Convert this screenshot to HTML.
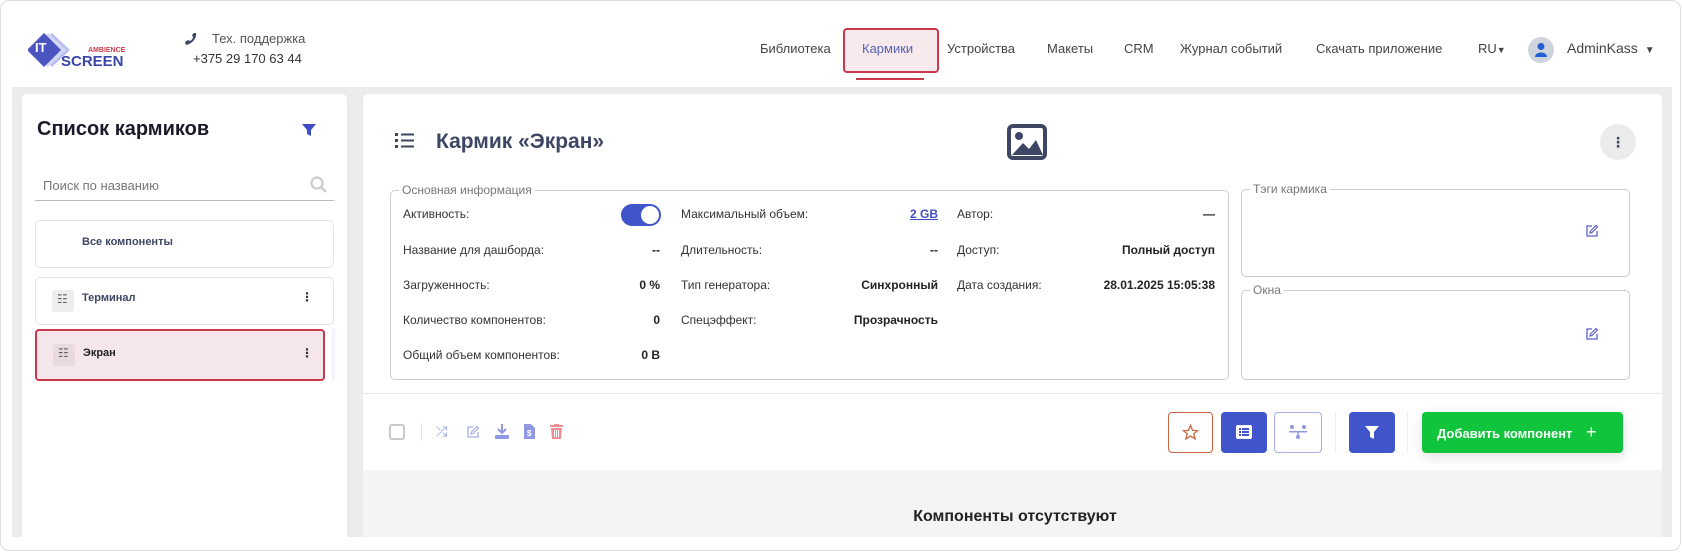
<!DOCTYPE html>
<html><head><meta charset="utf-8"><style>
*{box-sizing:border-box;margin:0;padding:0}
body{width:1682px;height:552px;background:#fff;font-family:"Liberation Sans","DejaVu Sans",sans-serif;position:relative;overflow:hidden;color:#333}
.a{position:absolute}
.frame{left:0;top:0;width:1681px;height:551px;border:1px solid #ddd;border-radius:9px}
.grey{left:12px;top:87px;width:1660px;height:450px;background:#ececec}
.card{background:#fff;border-radius:5px}
.nav{top:41px;font-size:13px;color:#444}
.lbl{font-size:12px;color:#333}
.val{font-size:12px;font-weight:bold;color:#222;text-align:right}
fieldset{position:absolute;border:1px solid #ccc;border-radius:5px}
legend{font-size:12px;color:#777;margin-left:8px;padding:0 3px}
.btn{border-radius:4px;height:41px;top:412px}
</style></head><body>
<div class="a frame"></div>

<!-- logo -->
<svg class="a" style="left:28px;top:30px" width="100" height="40" viewBox="0 0 100 40">
<path d="M24 3 L42 20 L24 37 L6 20Z" fill="#b9c0ee"/>
<path d="M20 3 L38 20 L20 37 L2 20Z" fill="#d4d8f6"/>
<path d="M16 3 L33 20 L16 37 L-1 20Z" fill="#4a55c0"/>
<text x="7" y="22" font-size="13" font-weight="bold" fill="#fff" font-family="Liberation Sans">IT</text>
<text x="60" y="22" font-size="7" font-weight="bold" fill="#d03a4a" font-family="Liberation Sans">AMBIENCE</text>
<text x="33" y="36" font-size="15" font-weight="bold" fill="#3a46a8" font-family="Liberation Sans">SCREEN</text>
</svg>
<svg class="a" style="left:184px;top:32px" width="14" height="14" viewBox="0 0 14 14"><path d="M12 1 C13 6 8 12 2 13 L1 10 L4 8 L6 9 C8 8 9 6 9 5 L8 3 L10 1Z" fill="#3d4663"/></svg>
<div class="a" style="left:212px;top:31px;font-size:13px;color:#555">Тех. поддержка</div>
<div class="a" style="left:193px;top:51px;font-size:13px;color:#333">+375 29 170 63 44</div>

<!-- nav -->
<div class="a nav" style="left:760px">Библиотека</div>
<div class="a" style="left:843px;top:28px;width:96px;height:45px;border:2px solid #c9394a;border-radius:4px;background:#f8e9ec"></div>
<div class="a nav" style="left:862px;color:#5562b8">Кармики</div>
<div class="a" style="left:856px;top:78px;width:68px;height:2px;background:#c9394a"></div>
<div class="a nav" style="left:947px">Устройства</div>
<div class="a nav" style="left:1047px">Макеты</div>
<div class="a nav" style="left:1124px">CRM</div>
<div class="a nav" style="left:1180px">Журнал событий</div>
<div class="a nav" style="left:1316px">Скачать приложение</div>
<div class="a nav" style="left:1478px">RU<span style="font-size:9px">▼</span></div>
<div class="a" style="left:1528px;top:37px;width:26px;height:26px;border-radius:50%;background:#cfd3dc"></div>
<svg class="a" style="left:1534px;top:42px" width="14" height="16" viewBox="0 0 14 16"><circle cx="7" cy="4.5" r="3.5" fill="#1f5fd0"/><path d="M1 15 C1 9 13 9 13 15Z" fill="#1f5fd0"/></svg>
<div class="a nav" style="left:1567px;font-size:14px;top:40px">AdminKass <span style="font-size:10px;margin-left:3px">▼</span></div>

<div class="a grey"></div>

<!-- sidebar -->
<div class="a card" style="left:22px;top:94px;width:325px;height:443px;border-radius:5px 5px 0 0"></div>
<div class="a" style="left:37px;top:118px;font-size:20px;font-weight:bold;color:#1a1a2a">Список кармиков</div>
<svg class="a" style="left:302px;top:124px" width="14" height="13" viewBox="0 0 14 13"><path d="M0 0H14L9 6V12L5 10V6Z" fill="#3f4ec4"/></svg>
<div class="a" style="left:43px;top:178px;font-size:13px;color:#777">Поиск по названию</div>
<svg class="a" style="left:310px;top:176px" width="17" height="17" viewBox="0 0 17 17"><circle cx="7" cy="7" r="5.5" stroke="#ccc" stroke-width="2.2" fill="none"/><path d="M11 11 L16 16" stroke="#ccc" stroke-width="2.5"/></svg>
<div class="a" style="left:35px;top:200px;width:299px;height:1px;background:#bbb"></div>

<div class="a" style="left:35px;top:220px;width:299px;height:48px;border:1px solid #e4e4e4;border-radius:5px"></div>
<div class="a" style="left:82px;top:236px;font-size:11px;font-weight:bold;color:#3d4663">Все компоненты</div>
<div class="a" style="left:35px;top:277px;width:299px;height:48px;border:1px solid #e4e4e4;border-radius:5px"></div>
<div class="a" style="left:52px;top:290px;width:22px;height:22px;background:#eee;border-radius:3px"></div>
<div class="a" style="left:57px;top:292px;font-size:12px;color:#666">☷</div>
<div class="a" style="left:82px;top:292px;font-size:11px;font-weight:bold;color:#3d4663">Терминал</div>
<div class="a" style="left:301px;top:290px;font-size:12px;font-weight:bold">⋮</div>
<div class="a" style="left:332px;top:329px;width:3px;height:52px;background:#f3f4fb"></div>
<div class="a" style="left:35px;top:329px;width:290px;height:52px;border:2px solid #c9394a;border-radius:4px;background:#f4e6eb"></div>
<div class="a" style="left:53px;top:344px;width:22px;height:22px;background:#e8dadf;border-radius:3px"></div>
<div class="a" style="left:58px;top:346px;font-size:12px;color:#666">☷</div>
<div class="a" style="left:83px;top:347px;font-size:11px;font-weight:bold;color:#222">Экран</div>
<div class="a" style="left:301px;top:346px;font-size:12px;font-weight:bold">⋮</div>

<!-- main -->
<div class="a card" style="left:363px;top:94px;width:1299px;height:443px;border-radius:5px 5px 0 0"></div>
<svg class="a" style="left:395px;top:132px" width="19" height="16" viewBox="0 0 19 16"><g fill="#3d4663"><rect x="0" y="1" width="3" height="3"/><rect x="0" y="7" width="3" height="3"/><rect x="0" y="13" width="3" height="3"/><rect x="6" y="1.5" width="13" height="2"/><rect x="6" y="7.5" width="13" height="2"/><rect x="6" y="13.5" width="13" height="2"/></g></svg>
<div class="a" style="left:436px;top:130px;font-size:21px;font-weight:bold;color:#3d4663">Кармик «Экран»</div>
<svg class="a" style="left:1007px;top:124px" width="40" height="36" viewBox="0 0 40 36"><rect x="2" y="2" width="36" height="32" rx="4" fill="none" stroke="#3d4663" stroke-width="4"/><circle cx="12" cy="12" r="4" fill="#3d4663"/><path d="M5 31 L16 19 L22 25 L29 16 L36 31Z" fill="#3d4663"/></svg>
<div class="a" style="left:1600px;top:124px;width:36px;height:36px;border-radius:50%;background:#ebebeb;text-align:center;font-size:14px;font-weight:bold;line-height:36px;color:#3d4663">⋮</div>

<fieldset style="left:390px;top:183px;width:839px;height:197px"><legend>Основная информация</legend></fieldset>
<div class="a lbl" style="left:403px;top:207px">Активность:</div>
<div class="a" style="left:621px;top:204px;width:40px;height:22px;border-radius:11px;background:#3f55c9"></div>
<div class="a" style="left:641px;top:206px;width:18px;height:18px;border-radius:50%;background:#fff"></div>
<div class="a lbl" style="left:403px;top:243px">Название для дашборда:</div>
<div class="a val" style="left:560px;top:243px;width:100px">--</div>
<div class="a lbl" style="left:403px;top:278px">Загруженность:</div>
<div class="a val" style="left:560px;top:278px;width:100px">0 %</div>
<div class="a lbl" style="left:403px;top:313px">Количество компонентов:</div>
<div class="a val" style="left:560px;top:313px;width:100px">0</div>
<div class="a lbl" style="left:403px;top:348px">Общий объем компонентов:</div>
<div class="a val" style="left:560px;top:348px;width:100px">0 B</div>

<div class="a lbl" style="left:681px;top:207px">Максимальный объем:</div>
<div class="a val" style="left:838px;top:207px;width:100px;color:#3f4ec4;text-decoration:underline">2 GB</div>
<div class="a lbl" style="left:681px;top:243px">Длительность:</div>
<div class="a val" style="left:838px;top:243px;width:100px">--</div>
<div class="a lbl" style="left:681px;top:278px">Тип генератора:</div>
<div class="a val" style="left:818px;top:278px;width:120px">Синхронный</div>
<div class="a lbl" style="left:681px;top:313px">Спецэффект:</div>
<div class="a val" style="left:818px;top:313px;width:120px">Прозрачность</div>

<div class="a lbl" style="left:957px;top:207px">Автор:</div>
<div class="a val" style="left:1115px;top:207px;width:100px">—</div>
<div class="a lbl" style="left:957px;top:243px">Доступ:</div>
<div class="a val" style="left:1075px;top:243px;width:140px">Полный доступ</div>
<div class="a lbl" style="left:957px;top:278px">Дата создания:</div>
<div class="a val" style="left:1055px;top:278px;width:160px">28.01.2025 15:05:38</div>

<fieldset style="left:1241px;top:182px;width:389px;height:95px"><legend>Тэги кармика</legend></fieldset>
<fieldset style="left:1241px;top:283px;width:389px;height:97px"><legend>Окна</legend></fieldset>
<svg class="a" style="left:1585px;top:224px" width="14" height="14" viewBox="0 0 14 14"><path d="M7 2H2V12H12V7" fill="none" stroke="#5a62c9" stroke-width="1.3"/><path d="M5 9L5.5 7 11 1.5 12.5 3 7 8.5Z" fill="none" stroke="#5a62c9" stroke-width="1.2"/></svg>
<svg class="a" style="left:1585px;top:327px" width="14" height="14" viewBox="0 0 14 14"><path d="M7 2H2V12H12V7" fill="none" stroke="#5a62c9" stroke-width="1.3"/><path d="M5 9L5.5 7 11 1.5 12.5 3 7 8.5Z" fill="none" stroke="#5a62c9" stroke-width="1.2"/></svg>

<div class="a" style="left:363px;top:393px;width:1299px;height:1px;background:#e6e6e6"></div>

<!-- toolbar -->
<div class="a" style="left:389px;top:424px;width:16px;height:16px;border:2px solid #c8c8c8;border-radius:3px"></div>
<div class="a" style="left:421px;top:423px;width:1px;height:18px;background:#e4e4e4"></div>
<div class="a" style="left:436px;top:423px;font-size:14px;color:#8f98e0">⤮</div>
<svg class="a" style="left:466px;top:425px" width="14" height="14" viewBox="0 0 14 14"><path d="M7 2H2V12H12V7" fill="none" stroke="#a7aee8" stroke-width="1.3"/><path d="M5 9L5.5 7 11 1.5 12.5 3 7 8.5Z" fill="none" stroke="#a7aee8" stroke-width="1.2"/></svg>
<svg class="a" style="left:495px;top:424px" width="14" height="15" viewBox="0 0 14 15"><path d="M7 0V9M3 5L7 9 11 5" stroke="#8f98e0" stroke-width="2" fill="none"/><rect x="0" y="11" width="14" height="4" rx="1" fill="#8f98e0"/></svg>
<svg class="a" style="left:524px;top:424px" width="11" height="15" viewBox="0 0 11 15"><path d="M0 0H7L11 4V15H0Z" fill="#8f98e0"/><text x="3" y="12" font-size="8" fill="#fff" font-family="Liberation Sans" font-weight="bold">$</text></svg>
<svg class="a" style="left:550px;top:424px" width="13" height="15" viewBox="0 0 13 15"><rect x="0" y="1" width="13" height="2" fill="#f08d95"/><rect x="4" y="0" width="5" height="2" fill="#f08d95"/><path d="M1 4H12L11 15H2Z" fill="#f08d95"/><path d="M4.5 6V13M6.5 6V13M8.5 6V13" stroke="#fff" stroke-width="1"/></svg>

<div class="a btn" style="left:1168px;width:45px;border:1px solid #c8643e;background:#fff"></div>
<svg class="a" style="left:1182px;top:424px" width="17" height="17" viewBox="0 0 24 24"><path d="M12 2L15 9 22 9.5 16.5 14 18.5 21 12 17 5.5 21 7.5 14 2 9.5 9 9Z" fill="none" stroke="#c8643e" stroke-width="1.8"/></svg>
<div class="a btn" style="left:1221px;width:46px;background:#3f55c9"></div>
<svg class="a" style="left:1236px;top:425px" width="16" height="14" viewBox="0 0 16 14"><rect width="16" height="14" rx="2" fill="#fff"/><g fill="#3f55c9"><rect x="3" y="3" width="2" height="2"/><rect x="3" y="6" width="2" height="2"/><rect x="3" y="9" width="2" height="2"/><rect x="6" y="3" width="7" height="2"/><rect x="6" y="6" width="7" height="2"/><rect x="6" y="9" width="7" height="2"/></g></svg>
<div class="a btn" style="left:1274px;width:48px;border:1px solid #a7aee8;background:#fff"></div>
<svg class="a" style="left:1289px;top:424px" width="18" height="16" viewBox="0 0 18 16"><g fill="#8f98e0"><circle cx="3" cy="3" r="2"/><circle cx="15" cy="3" r="2"/><circle cx="9" cy="13" r="2"/><rect x="0" y="7" width="18" height="1.5"/><rect x="8.3" y="7" width="1.5" height="5"/></g></svg>
<div class="a" style="left:1335px;top:412px;width:1px;height:41px;background:#eee"></div>
<div class="a btn" style="left:1349px;width:46px;background:#3f55c9"></div>
<svg class="a" style="left:1365px;top:426px" width="14" height="13" viewBox="0 0 14 13"><path d="M0 0H14L9 6V13L5 11V6Z" fill="#fff"/></svg>
<div class="a" style="left:1407px;top:412px;width:1px;height:41px;background:#eee"></div>
<div class="a btn" style="left:1422px;width:201px;background:#10c43c;box-shadow:0 4px 14px rgba(0,0,0,.12);color:#fff;font-weight:bold;font-size:13px;line-height:41px;padding-left:15px">Добавить компонент <span style="font-size:18px;font-weight:normal;margin-left:10px">+</span></div>

<div class="a" style="left:363px;top:470px;width:1299px;height:67px;background:#f4f4f4"></div>
<div class="a" style="left:860px;top:508px;width:310px;text-align:center;font-size:16px;font-weight:bold;color:#222">Компоненты отсутствуют</div>
</body></html>
